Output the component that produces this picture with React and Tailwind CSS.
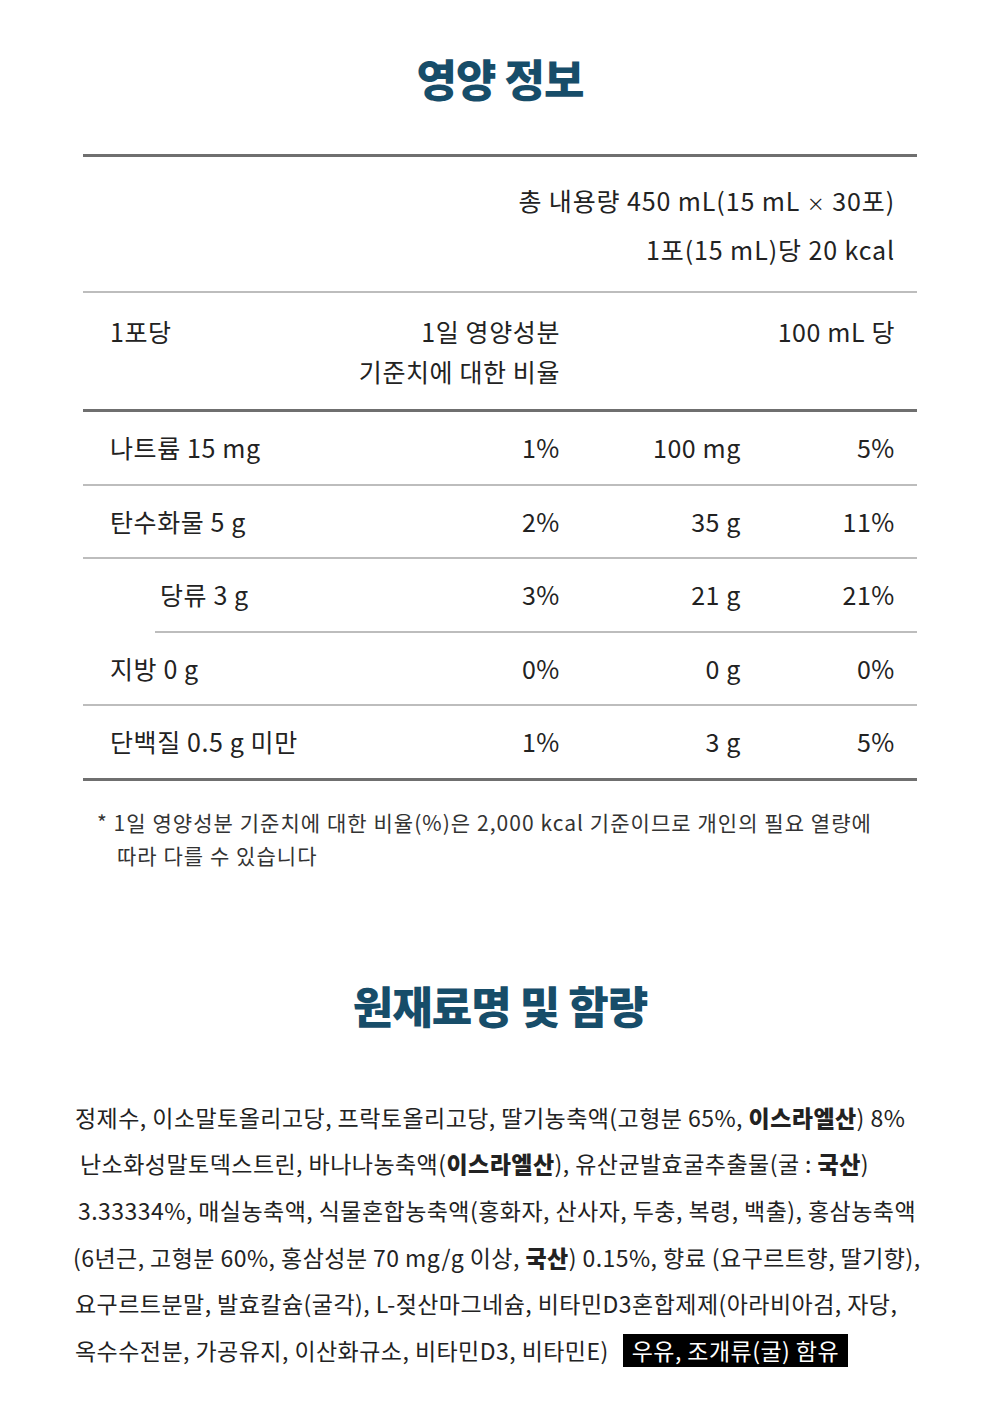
export default function App() {
  const font = { fontFamily: '"Noto Sans CJK KR", "Noto Sans", sans-serif' };
  const rows = [
    { label: "나트륨 15 mg", a: "1%", b: "100 mg", c: "5%" },
    { label: "탄수화물 5 g", a: "2%", b: "35 g", c: "11%" },
    { label: "당류 3 g", a: "3%", b: "21 g", c: "21%", indent: true },
    { label: "지방 0 g", a: "0%", b: "0 g", c: "0%" },
    { label: "단백질 0.5 g 미만", a: "1%", b: "3 g", c: "5%" },
  ];
  return (
    <div className="w-[1000px] h-[1425px] bg-white text-[#222] overflow-hidden" style={font}>
      <h1 className="pt-[46px] text-center text-[44px] leading-[64px] font-black text-[#174d69] tracking-[-1px]">
        영양 정보
      </h1>

      <div className="mx-[83px] mt-[44px]">
        <div className="h-[3px] bg-[#6f6f6f]" />
        <div className="pt-[20px] pb-[19px] pr-[22px] text-right text-[25px] leading-[46px] tracking-[0.9px]">
          <div>총 내용량 450 mL(15 mL <span className="text-[18px]">×</span> 30포)</div>
          <div>1포(15 mL)당 20 kcal</div>
        </div>
        <div className="h-[2px] bg-[#bdbdbd]" />
        <div className="grid grid-cols-[240px_210px_181px_154px] pl-[27px] py-[18px] text-[25px] leading-[40px] tracking-[0.6px]">
          <div>1포당</div>
          <div className="text-right whitespace-nowrap">
            <div>1일 영양성분</div>
            <div>기준치에 대한 비율</div>
          </div>
          <div />
          <div className="text-right">100 mL 당</div>
        </div>
        <div className="h-[3px] bg-[#6f6f6f]" />
        {rows.map((r, i) => (
          <div key={i}>
            <div className="grid grid-cols-[240px_210px_181px_154px] pl-[27px] h-[71.5px] items-center text-[25px] tracking-[0.6px] whitespace-nowrap">
              <div className={r.indent ? "pl-[50px]" : ""}>{r.label}</div>
              <div className="text-right">{r.a}</div>
              <div className="text-right">{r.b}</div>
              <div className="text-right">{r.c}</div>
            </div>
            {i < rows.length - 1 ? (
              <div className={i === 2 ? "ml-[72px] h-[2px] bg-[#bdbdbd]" : "h-[2px] bg-[#bdbdbd]"} />
            ) : (
              <div className="h-[3px] bg-[#6f6f6f]" />
            )}
          </div>
        ))}
      </div>

      <div className="mt-[25px] pl-[97px] text-[21px] leading-[33px] text-[#333] tracking-[1.05px] whitespace-nowrap">
        <div>* 1일 영양성분 기준치에 대한 비율(%)은 2,000 kcal 기준이므로 개인의 필요 열량에</div>
        <div className="pl-[20px]">따라 다를 수 있습니다</div>
      </div>

      <h2 className="mt-[101px] text-center text-[44px] leading-[64px] font-black text-[#174d69] tracking-[-1px]">
        원재료명 및 함량
      </h2>

      <div className="mt-[57px] pl-[75px] text-[23px] leading-[46.7px] tracking-[0.45px] whitespace-nowrap">
        <div>정제수, 이소말토올리고당, 프락토올리고당, 딸기농축액(고형분 65%, <b className="font-black">이스라엘산</b>) 8%</div>
        <div className="pl-[5px]">난소화성말토덱스트린, 바나나농축액(<b className="font-black">이스라엘산</b>), 유산균발효굴추출물(굴 : <b className="font-black">국산</b>)</div>
        <div className="pl-[3px]">3.33334%, 매실농축액, 식물혼합농축액(홍화자, 산사자, 두충, 복령, 백출), 홍삼농축액</div>
        <div className="-ml-[2px]">(6년근, 고형분 60%, 홍삼성분 70 mg/g 이상, <b className="font-black">국산</b>) 0.15%, 향료 (요구르트향, 딸기향),</div>
        <div>요구르트분말, 발효칼슘(굴각), L-젖산마그네슘, 비타민D3혼합제제(아라비아검, 자당,</div>
        <div className="flex items-center">
          <span>옥수수전분, 가공유지, 이산화규소, 비타민D3, 비타민E)</span>
          <span className="ml-[14px] bg-black text-white px-[9px] leading-[33px]">우유, 조개류(굴) 함유</span>
        </div>
      </div>
    </div>
  );
}
